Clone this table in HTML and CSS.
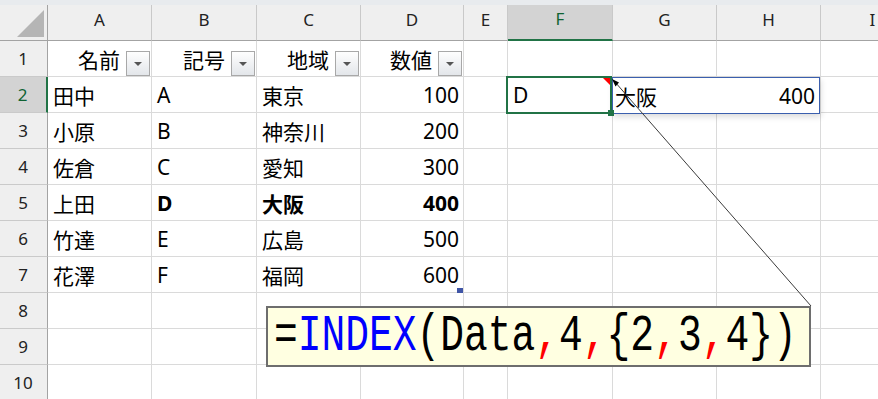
FILE: index.html
```html
<!DOCTYPE html>
<html lang="ja">
<head>
<meta charset="utf-8">
<title>INDEX</title>
<link rel="stylesheet" href="styles.css">
</head>
<body>
<div class="sheet">
  <div class="strip"></div>
  <div class="grid">
    <div class="corner"><span class="tri"></span></div>
    <div class="hd">A</div><div class="hd">B</div><div class="hd">C</div><div class="hd">D</div><div class="hd">E</div><div class="hd hd-sel">F</div><div class="hd">G</div><div class="hd">H</div><div class="hd">I</div>

    <div class="rh">1</div>
    <div class="c th"><span>名前</span><span class="dd"></span></div>
    <div class="c th"><span>記号</span><span class="dd"></span></div>
    <div class="c th"><span>地域</span><span class="dd"></span></div>
    <div class="c th"><span>数値</span><span class="dd"></span></div>
    <div class="c"></div><div class="c"></div><div class="c"></div><div class="c"></div><div class="c"></div>

    <div class="rh rh-sel">2</div>
    <div class="c">田中</div><div class="c">A</div><div class="c">東京</div><div class="c r">100</div>
    <div class="c"></div><div class="c">D</div><div class="c"></div><div class="c"></div><div class="c"></div>

    <div class="rh">3</div>
    <div class="c">小原</div><div class="c">B</div><div class="c">神奈川</div><div class="c r">200</div>
    <div class="c"></div><div class="c"></div><div class="c"></div><div class="c"></div><div class="c"></div>

    <div class="rh">4</div>
    <div class="c">佐倉</div><div class="c">C</div><div class="c">愛知</div><div class="c r">300</div>
    <div class="c"></div><div class="c"></div><div class="c"></div><div class="c"></div><div class="c"></div>

    <div class="rh">5</div>
    <div class="c">上田</div><div class="c b">D</div><div class="c b">大阪</div><div class="c r b">400</div>
    <div class="c"></div><div class="c"></div><div class="c"></div><div class="c"></div><div class="c"></div>

    <div class="rh">6</div>
    <div class="c">竹達</div><div class="c">E</div><div class="c">広島</div><div class="c r">500</div>
    <div class="c"></div><div class="c"></div><div class="c"></div><div class="c"></div><div class="c"></div>

    <div class="rh">7</div>
    <div class="c">花澤</div><div class="c">F</div><div class="c">福岡</div><div class="c r">600</div>
    <div class="c"></div><div class="c"></div><div class="c"></div><div class="c"></div><div class="c"></div>

    <div class="rh">8</div>
    <div class="c"></div><div class="c"></div><div class="c"></div><div class="c"></div><div class="c"></div><div class="c"></div><div class="c"></div><div class="c"></div><div class="c"></div>

    <div class="rh">9</div>
    <div class="c"></div><div class="c"></div><div class="c"></div><div class="c"></div><div class="c"></div><div class="c"></div><div class="c"></div><div class="c"></div><div class="c"></div>

    <div class="rh">10</div>
    <div class="c"></div><div class="c"></div><div class="c"></div><div class="c"></div><div class="c"></div><div class="c"></div><div class="c"></div><div class="c"></div><div class="c"></div>
  </div>

  <div class="resize-handle"></div>
  <div class="picture"><span>大阪</span><span>400</span></div>
  <div class="selection"><span class="comment"></span><span class="fill"></span></div>
  <div class="callout"><span class="formula">=<span class="fn">INDEX</span>(Data<span class="sep">,</span>4<span class="sep">,</span>{2<span class="sep">,</span>3<span class="sep">,</span>4})</span></div>
  <svg class="leader" width="878" height="399" viewBox="0 0 878 399">
    <line x1="811" y1="306" x2="615" y2="82" stroke="#3a3a3a" stroke-width="1"/>
    <polygon points="612,79 619,82.5 615.5,86.5" fill="#000"/>
  </svg>
</div>
</body>
</html>
```

FILE: styles.css
```css
html, body {
  margin: 0;
  padding: 0;
  overflow: hidden;
  background: #ffffff;
}

.sheet {
  position: relative;
  width: 878px;
  height: 399px;
  overflow: hidden;
  font-family: "Noto Sans", "Noto Sans CJK JP", sans-serif;
  color: #000;
}

.strip {
  height: 5px;
  background: #e8ebee;
}

.grid {
  display: grid;
  grid-template-columns: 48px 104px 105px 104px 103px 44px 105px 104px 104px 104px;
  grid-template-rows: 36px repeat(10, 36px);
  width: 925px;
}

.corner {
  position: relative;
  background: #efefef;
  border-right: 1px solid #a3a3a3;
  border-bottom: 1px solid #a3a3a3;
  box-sizing: border-box;
}

.tri {
  position: absolute;
  left: 17px;
  top: 5px;
  width: 0;
  height: 0;
  border-left: 27px solid transparent;
  border-bottom: 27px solid #b5b5b5;
}

.hd {
  box-sizing: border-box;
  background: #efefef;
  border-right: 1px solid #c9c9c9;
  border-bottom: 1px solid #a3a3a3;
  display: flex;
  align-items: center;
  justify-content: center;
  padding-bottom: 7px;
  font-size: 17px;
  color: #222;
}

.hd-sel {
  background: #d3d3d3;
  border-bottom: 2px solid #217346;
  color: #0f6232;
}

.rh {
  box-sizing: border-box;
  background: #efefef;
  border-right: 1px solid #a3a3a3;
  border-bottom: 1px solid #cacaca;
  display: flex;
  align-items: center;
  justify-content: center;
  font-size: 17px;
  color: #222;
  padding-right: 1px;
}

.rh-sel {
  background: #d3d3d3;
  border-right: 2px solid #217346;
  color: #0f6232;
}

.c {
  box-sizing: border-box;
  border-right: 1px solid #dadada;
  border-bottom: 1px solid #dadada;
  display: flex;
  align-items: center;
  padding: 0 4px 0 5px;
  font-size: 21px;
  white-space: nowrap;
  overflow: hidden;
}

.r {
  justify-content: flex-end;
}

.b {
  font-weight: bold;
}

.th {
  justify-content: flex-end;
  padding-right: 1px;
}

.dd {
  flex: none;
  align-self: flex-end;
  width: 24px;
  height: 25px;
  margin-left: 6px;
  box-sizing: border-box;
  border: 1px solid #a8a8a8;
  background: linear-gradient(#fefefe, #e3e6ea);
  display: flex;
  align-items: center;
  justify-content: center;
}

.dd::after {
  content: "";
  width: 0;
  height: 0;
  border-left: 4px solid transparent;
  border-right: 4px solid transparent;
  border-top: 4px solid #555;
}

.resize-handle {
  position: absolute;
  left: 457px;
  top: 288px;
  width: 6px;
  height: 5px;
  background: #3f55a6;
}

.picture {
  position: absolute;
  left: 612px;
  top: 77px;
  width: 208px;
  height: 37px;
  box-sizing: border-box;
  border: 1px solid #3b5fae;
  background: #fff;
  box-shadow: 1px 3px 6px rgba(0, 0, 0, 0.14);
  display: flex;
  align-items: center;
  justify-content: space-between;
  padding: 0 4px 0 2px;
  font-size: 21px;
}

.selection {
  position: absolute;
  left: 506px;
  top: 76px;
  width: 106px;
  height: 38px;
  box-sizing: border-box;
  border: 2px solid #217346;
}

.comment {
  position: absolute;
  right: 0;
  top: 0;
  width: 0;
  height: 0;
  border-left: 7px solid transparent;
  border-top: 7px solid #ff0000;
}

.fill {
  position: absolute;
  right: -4px;
  bottom: -4px;
  width: 6px;
  height: 6px;
  background: #217346;
}

.callout {
  position: absolute;
  left: 266px;
  top: 306px;
  width: 545px;
  height: 61px;
  box-sizing: border-box;
  border: 2px solid #6e6e6e;
  background: #ffffe1;
  display: flex;
  align-items: center;
  padding-left: 6px;
  overflow: hidden;
}

.formula {
  display: inline-block;
  font-family: "Liberation Mono", "DejaVu Sans Mono", monospace;
  font-size: 39.6px;
  line-height: 1;
  color: #000;
  transform: scaleY(1.3);
  transform-origin: center;
  white-space: pre;
}

.fn {
  color: #0000ff;
}

.sep {
  color: #ff0000;
}

.leader {
  position: absolute;
  left: 0;
  top: 0;
  pointer-events: none;
}
```
